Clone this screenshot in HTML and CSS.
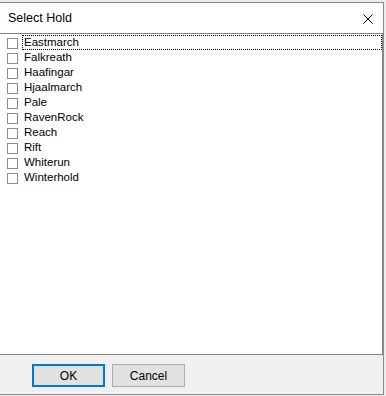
FILE: index.html
```html
<!DOCTYPE html>
<html lang="en">
<head>
  <meta charset="UTF-8">
  <title>Select Hold</title>
  <link rel="stylesheet" href="styles.css">
</head>
<body>

<!-- Dialog -->
<div class="dialog">

  <!-- Title bar -->
  <div class="titlebar">
    <span class="title">Select Hold</span>
    <svg class="close" width="10" height="10" viewBox="0 0 10 10">
      <path d="M0.5 0.5 L9.5 9.5 M9.5 0.5 L0.5 9.5" stroke="#000" stroke-width="1" fill="none"/>
    </svg>
  </div>

  <!-- Hold list -->
  <div class="list">
    <label class="row focus"><span class="box"></span><span class="name">Eastmarch</span></label>
    <label class="row"><span class="box"></span><span class="name">Falkreath</span></label>
    <label class="row"><span class="box"></span><span class="name">Haafingar</span></label>
    <label class="row"><span class="box"></span><span class="name">Hjaalmarch</span></label>
    <label class="row"><span class="box"></span><span class="name">Pale</span></label>
    <label class="row"><span class="box"></span><span class="name">RavenRock</span></label>
    <label class="row"><span class="box"></span><span class="name">Reach</span></label>
    <label class="row"><span class="box"></span><span class="name">Rift</span></label>
    <label class="row"><span class="box"></span><span class="name">Whiterun</span></label>
    <label class="row"><span class="box"></span><span class="name">Winterhold</span></label>
  </div>

  <!-- Buttons -->
  <div class="footer">
    <button class="btn default">OK</button>
    <button class="btn">Cancel</button>
  </div>

</div>

</body>
</html>
```

FILE: styles.css
```css
body { margin: 0; background: #ececec; font-family: "Liberation Sans", Arial, sans-serif; overflow: hidden; }
.dialog { width: 383px; height: 391px; margin-top: 2px; border: 1px solid #8a8a8a; border-left: none; background: #fff; display: flex; flex-direction: column; }
.titlebar { height: 30px; display: flex; align-items: center; justify-content: space-between; padding: 0 10px 0 8px; }
.title { font-size: 12.5px; color: #000; }
.close { display: block; margin-top: 1px; }
.list { height: 319px; border-top: 1px solid #828282; border-right: 1px solid #828282; border-bottom: 1px solid #828282; padding-top: 1px; box-sizing: content-box; }
.row { display: flex; align-items: center; height: 15px; font-size: 11.5px; color: #000; }
.box { width: 11px; height: 11px; border: 1px solid #8c8c8c; box-sizing: border-box; margin: 1px 5px 0 7px; flex: none; background: #fff; }
.name { padding-left: 1px; line-height: 15px; }
.focus .name { flex: 1; outline: 1px dotted #000; outline-offset: -1px; margin-left: -1px; padding-left: 2px; }
.footer { flex: 1; background: #f0f0f0; display: flex; gap: 7px; padding: 9px 0 0 32px; align-items: flex-start; }
.btn { width: 73px; height: 23px; background: #e1e1e1; border: 1px solid #adadad; font-family: "Liberation Sans", Arial, sans-serif; font-size: 12px; color: #000; padding: 0; }
.btn.default { border: 2px solid #0078d7; }
```
